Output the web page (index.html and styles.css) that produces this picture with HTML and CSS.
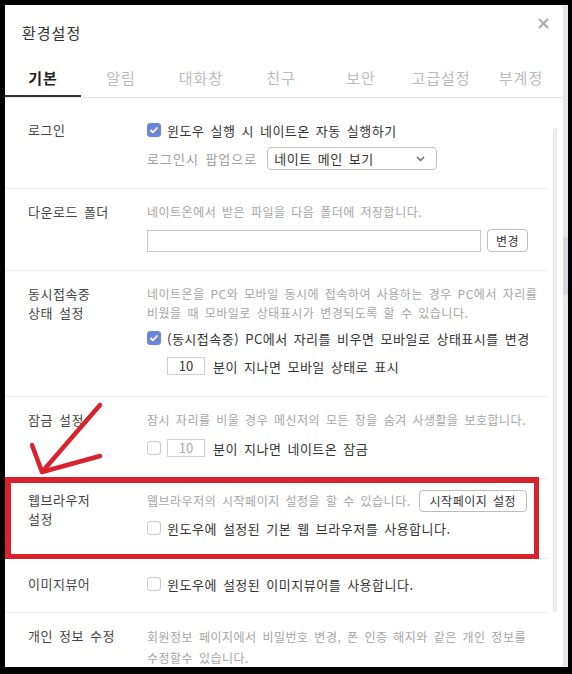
FILE: index.html
```html
<!DOCTYPE html>
<html lang="ko">
<head>
    <meta charset="UTF-8">
    <meta name="viewport" content="width=device-width, initial-scale=1.0">
    <title>환경설정</title>
    <link rel="stylesheet" href="styles.css">
</head>
<body>
    <div class="frame">
        <div class="dialog">
            <div class="header">
                <h1 class="title">환경설정</h1>
                <span class="close">
                    <svg width="11" height="11" viewBox="0 0 11 11"><path d="M1 1L10 10M10 1L1 10" stroke="#a8a8a8" stroke-width="2"/></svg>
                </span>
            </div>

            <div class="tabs">
                <span class="tab active">기본</span>
                <span class="tab">알림</span>
                <span class="tab">대화창</span>
                <span class="tab">친구</span>
                <span class="tab">보안</span>
                <span class="tab">고급설정</span>
                <span class="tab">부계정</span>
            </div>

            <div class="panel">
                <div class="rows">
                    <div class="row">
                        <div class="label offset">로그인</div>
                        <div class="content">
                            <label class="check"><span class="box on"><svg width="10" height="8" viewBox="0 0 10 8"><path d="M1.5 4L4 6.3L8.5 1.5" fill="none" stroke="#fff" stroke-width="1.8"/></svg></span>윈도우 실행 시 네이트온 자동 실행하기</label>
                            <div class="line popup">
                                <span class="hint">로그인시 팝업으로</span>
                                <div class="select">
                                    <span>네이트 메인 보기</span>
                                    <svg width="9" height="6" viewBox="0 0 9 6"><path d="M1 1L4.5 4.5L8 1" fill="none" stroke="#666" stroke-width="1.5"/></svg>
                                </div>
                            </div>
                        </div>
                    </div>

                    <div class="row">
                        <div class="label">다운로드 폴더</div>
                        <div class="content">
                            <div class="desc">네이트온에서 받은 파일을 다음 폴더에 저장합니다.</div>
                            <div class="line folder">
                                <div class="path"></div>
                                <span class="btn">변경</span>
                            </div>
                        </div>
                    </div>

                    <div class="row">
                        <div class="label two">동시접속중<br>상태 설정</div>
                        <div class="content">
                            <div class="desc two">네이트온을 PC와 모바일 동시에 접속하여 사용하는 경우 PC에서 자리를<br>비웠을 때 모바일로 상태표시가 변경되도록 할 수 있습니다.</div>
                            <label class="check"><span class="box on"><svg width="10" height="8" viewBox="0 0 10 8"><path d="M1.5 4L4 6.3L8.5 1.5" fill="none" stroke="#fff" stroke-width="1.8"/></svg></span>(동시접속중) PC에서 자리를 비우면 모바일로 상태표시를 변경</label>
                            <div class="minutes">
                                <span class="num">10</span>
                                <span>분이 지나면 모바일 상태로 표시</span>
                            </div>
                        </div>
                    </div>

                    <div class="row">
                        <div class="label">잠금 설정</div>
                        <div class="content">
                            <div class="desc">잠시 자리를 비울 경우 메신저의 모든 창을 숨겨 사생활을 보호합니다.</div>
                            <label class="check lock"><span class="box"></span><span class="num off">10</span>분이 지나면 네이트온 잠금</label>
                        </div>
                    </div>

                    <div class="row marked">
                        <div class="label two">웹브라우저<br>설정</div>
                        <div class="content">
                            <div class="line start">
                                <span class="desc">웹브라우저의 시작페이지 설정을 할 수 있습니다.</span>
                                <span class="btn wide">시작페이지 설정</span>
                            </div>
                            <label class="check"><span class="box"></span>윈도우에 설정된 기본 웹 브라우저를 사용합니다.</label>
                        </div>
                    </div>

                    <div class="row viewer">
                        <div class="label offset">이미지뷰어</div>
                        <div class="content">
                            <label class="check"><span class="box"></span>윈도우에 설정된 이미지뷰어를 사용합니다.</label>
                        </div>
                    </div>

                    <div class="row">
                        <div class="label">개인 정보 수정</div>
                        <div class="content">
                            <div class="desc loose">회원정보 페이지에서 비밀번호 변경, 폰 인증 해지와 같은 개인 정보를<br>수정할수 있습니다.</div>
                        </div>
                    </div>
                </div>
                <div class="scroll"><div class="track"></div></div>
            </div>

            <!-- red annotation arrow -->
            <svg class="arrow" width="110" height="475" viewBox="0 0 110 475">
                <path d="M95 400L37 467M27 440L37 467M95 451L37 467" fill="none" stroke="#d8232c" stroke-width="4.5" stroke-linecap="round"/>
            </svg>
        </div>
        <div class="edge"><div class="edge-thumb"></div></div>
    </div>
</body>
</html>
```

FILE: styles.css
```css
body {
    margin: 0;
    background-color: #000;
    font-family: "Noto Sans CJK KR", "Noto Sans", sans-serif;
    word-spacing: 0.12em;
    letter-spacing: 0.5px;
}
.frame {
    display: flex;
    padding: 5px 0 0 5px;
}
.dialog {
    position: relative;
    width: 558px;
    height: 662px;
    background-color: #fff;
    display: flex;
    flex-direction: column;
    overflow: hidden;
}
.edge {
    width: 5px;
    height: 662px;
    background-color: #e6e6e6;
}
.edge-thumb {
    margin-top: 232px;
    height: 58px;
    background-color: #d4d7df;
}
.header {
    height: 50px;
    box-sizing: border-box;
    padding: 18px 14px 0 17px;
    display: flex;
    justify-content: space-between;
    align-items: flex-start;
}
.title {
    margin: 0;
    font-size: 15px;
    font-weight: normal;
    line-height: 20px;
    letter-spacing: 1px;
    color: #333;
}
.close {
    margin-top: -5px;
    line-height: 0;
}
.tabs {
    display: flex;
    height: 42px;
    border-bottom: 1px solid #e6e6e6;
}
.tab {
    width: 80px;
    box-sizing: border-box;
    padding-top: 13px;
    text-align: center;
    font-size: 15px;
    line-height: 20px;
    letter-spacing: 1px;
    color: #bbb;
}
.tab.active {
    width: 76px;
    color: #222;
    font-weight: bold;
    box-shadow: inset 0 -2px 0 #333;
}
.panel {
    flex: 1;
    display: flex;
    min-height: 0;
}
.rows {
    width: 543px;
    padding-top: 7px;
}
.row {
    position: relative;
    display: flex;
    padding: 13px 8px 18px 23px;
    border-bottom: 1px solid #ececec;
}
.row.marked {
    padding-top: 11px;
}
.row.marked::after {
    content: '';
    position: absolute;
    left: 0;
    right: 9px;
    top: -2px;
    bottom: -1px;
    border: 6px solid #d8232c;
    border-right-width: 5px;
    border-bottom-width: 5px;
}
.row.viewer {
    padding-bottom: 16px;
}
.label {
    width: 119px;
    flex: none;
    font-size: 13px;
    line-height: 20px;
    color: #444;
}
.label.offset {
    padding-top: 2px;
}
.label.two {
    line-height: 19px;
}
.content {
    flex: 1;
    display: flex;
    flex-direction: column;
    gap: 4px;
}
.desc {
    font-size: 12px;
    line-height: 20px;
    color: #a6a6a6;
    white-space: nowrap;
}
.desc.two {
    line-height: 19px;
}
.desc.loose {
    line-height: 21px;
}
.hint {
    font-size: 13px;
    letter-spacing: 1px;
    color: #a0a0a0;
}
.line {
    display: flex;
    align-items: center;
}
.popup {
    margin-top: 1px;
    gap: 10px;
}
.select {
    width: 170px;
    height: 23px;
    box-sizing: border-box;
    border: 1px solid #c4c4c4;
    border-radius: 4px;
    padding: 0 11px 0 6px;
    display: flex;
    justify-content: space-between;
    align-items: center;
    font-size: 13px;
    color: #333;
}
.folder {
    margin-top: 3px;
    gap: 6px;
}
.path {
    width: 334px;
    height: 22px;
    box-sizing: border-box;
    border: 1px solid #c8c8c8;
}
.btn {
    height: 23px;
    box-sizing: border-box;
    border: 1px solid #bdbdbd;
    border-radius: 4px;
    padding: 0 8px;
    font-size: 12px;
    line-height: 21px;
    color: #333;
    white-space: nowrap;
}
.start {
    height: 22px;
    gap: 8px;
}
.btn.wide {
    height: 22px;
    line-height: 20px;
    padding: 0 10px;
}
.check {
    display: flex;
    align-items: center;
    gap: 6px;
    height: 24px;
    font-size: 13px;
    color: #333;
    white-space: nowrap;
}
.check.lock {
    margin-top: 2px;
}
.box {
    width: 14px;
    height: 14px;
    box-sizing: border-box;
    flex: none;
    border: 1px solid #c9c9c9;
    border-radius: 3px;
    background-color: #fff;
    display: flex;
    align-items: center;
    justify-content: center;
}
.box.on {
    background-color: #6b86d8;
    border-color: #6b86d8;
}
.minutes {
    display: flex;
    align-items: center;
    gap: 8px;
    height: 24px;
    padding-left: 20px;
    font-size: 13px;
    color: #333;
}
.num {
    width: 38px;
    height: 18px;
    box-sizing: border-box;
    border: 1px solid #cfcfcf;
    text-align: center;
    font-size: 13px;
    line-height: 16px;
    letter-spacing: 0;
    color: #333;
}
.num.off {
    color: #aaa;
    margin-right: 2px;
}
.scroll {
    width: 15px;
    padding-top: 30px;
}
.track {
    margin-left: 5px;
    width: 4px;
    height: 484px;
    box-sizing: border-box;
    border: 1px solid #e6e6e6;
    border-radius: 2px;
    background-color: #f3f3f3;
}
.arrow {
    position: absolute;
    left: 0;
    top: 0;
    pointer-events: none;
}
```
